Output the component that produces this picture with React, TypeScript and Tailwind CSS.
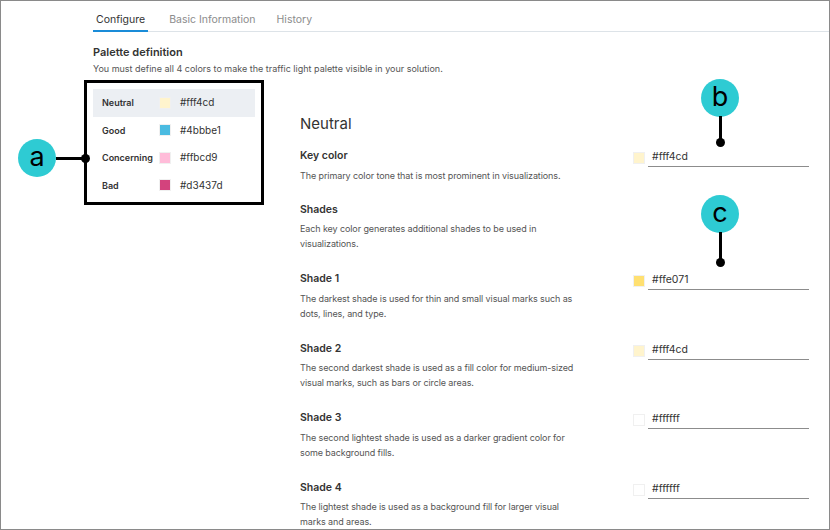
const palette = [
  { name: "Neutral", hex: "#fff4cd", active: true },
  { name: "Good", hex: "#4bbbe1" },
  { name: "Concerning", hex: "#ffbcd9" },
  { name: "Bad", hex: "#d3437d" },
];

const shades = [
  {
    title: "Shade 1",
    hex: "#ffe071",
    desc: "The darkest shade is used for thin and small visual marks such as dots, lines, and type.",
  },
  {
    title: "Shade 2",
    hex: "#fff4cd",
    desc: "The second darkest shade is used as a fill color for medium-sized visual marks, such as bars or circle areas.",
  },
  {
    title: "Shade 3",
    hex: "#ffffff",
    desc: "The second lightest shade is used as a darker gradient color for some background fills.",
  },
  {
    title: "Shade 4",
    hex: "#ffffff",
    desc: "The lightest shade is used as a background fill for larger visual marks and areas.",
  },
];

function ColorInput({ hex }: { hex: string }) {
  return (
    <div className="flex w-[176px] items-center gap-[3px]">
      <span
        className="h-[12px] w-[12px] shrink-0 border border-[#f0f0f0]"
        style={{ backgroundColor: hex }}
      />
      <div className="flex-1 border-b border-[#8c8c8c] pb-[1px] pl-[4px] text-[10.5px] leading-[16px] text-[#333]">
        {hex}
      </div>
    </div>
  );
}

function Callout({ letter, className }: { letter: string; className: string }) {
  return (
    <div
      className={
        "absolute flex h-[38px] w-[38px] items-center justify-center rounded-full bg-[#2ecbd3] pb-[3px] text-[27px] leading-none text-black " +
        className
      }
    >
      {letter}
    </div>
  );
}

export default function App() {
  return (
    <div className="relative h-[530px] w-[830px] overflow-hidden border border-[#8a8a8a] bg-white font-['Inter',sans-serif] text-[#333]">
      {/* tabs */}
      <div className="ml-[92px] flex h-[31px] items-end gap-[21px] border-b border-[#dde3e8]">
        <div className="-mb-px border-b-2 border-[#1a8cd8] px-[3px] pb-[2px] text-[10.5px] text-[#333]">
          Configure
        </div>
        <div className="pb-[3px] text-[10.5px] text-[#8c8c8c]">Basic Information</div>
        <div className="pb-[3px] text-[10.5px] text-[#8c8c8c]">History</div>
      </div>

      <div className="pl-[92px] pt-[13px]">
        <h2 className="text-[11px] font-semibold leading-[14px]">Palette definition</h2>
        <p className="mt-[3px] text-[9px] leading-[14px] text-[#555]">
          You must define all 4 colors to make the traffic light palette visible in your solution.
        </p>

        <div className="mt-[4px] flex">
          {/* palette list */}
          <div className="-ml-[9px] h-[125px] w-[180px] shrink-0 border-[3px] border-black px-[6px] pt-[6px]">
            {palette.map((p) => (
              <div
                key={p.name}
                className={
                  "flex h-[27.5px] items-center pl-[9px] text-[9px] " +
                  (p.active ? "bg-[#eceff3]" : "")
                }
              >
                <span className="w-[57px] font-semibold text-[#333]">{p.name}</span>
                <span
                  className="h-[12px] w-[12px] border border-[#f0f0f0]"
                  style={{ backgroundColor: p.hex }}
                />
                <span className="ml-[9px] text-[10px] text-[#333]">{p.hex}</span>
              </div>
            ))}
          </div>

          {/* detail */}
          <div className="ml-[36px] w-[509px] pt-[35px]">
            <h3 className="text-[15px] leading-[18px] text-[#333]">Neutral</h3>

            <div className="mt-[16px] flex items-start justify-between">
              <div className="w-[278px]">
                <div className="text-[10.5px] font-semibold leading-[14px]">Key color</div>
                <p className="mt-[4.5px] text-[9px] leading-[15px] tracking-[-0.1px] text-[#555]">
                  The primary color tone that is most prominent in visualizations.
                </p>
              </div>
              <ColorInput hex="#fff4cd" />
            </div>

            <div className="mt-[20px] w-[278px]">
              <div className="text-[10.5px] font-semibold leading-[14px]">Shades</div>
              <p className="mt-[4.5px] text-[9px] leading-[15px] tracking-[-0.1px] text-[#555]">
                Each key color generates additional shades to be used in visualizations.
              </p>
            </div>

            {shades.map((s) => (
              <div key={s.title} className="mt-[21px] flex items-start justify-between">
                <div className="w-[278px]">
                  <div className="text-[10.5px] font-semibold leading-[14px]">{s.title}</div>
                  <p className="mt-[4.5px] text-[9px] leading-[15px] tracking-[-0.1px] text-[#555]">
                    {s.desc}
                  </p>
                </div>
                <ColorInput hex={s.hex} />
              </div>
            ))}
          </div>
        </div>
      </div>

      {/* callouts */}
      <Callout letter="a" className="left-[17px] top-[138px]" />
      <div className="absolute left-[55px] top-[156px] h-[3px] w-[29px] bg-black" />
      <div className="absolute left-[80px] top-[153px] h-[9px] w-[9px] rounded-full bg-black" />

      <Callout letter="b" className="left-[700px] top-[78px]" />
      <div className="absolute left-[718px] top-[115px] h-[26px] w-[3px] bg-black" />
      <div className="absolute left-[715px] top-[137px] h-[9px] w-[9px] rounded-full bg-black" />

      <Callout letter="c" className="left-[700px] top-[194px]" />
      <div className="absolute left-[718px] top-[231px] h-[30px] w-[3px] bg-black" />
      <div className="absolute left-[715px] top-[257px] h-[9px] w-[9px] rounded-full bg-black" />
    </div>
  );
}
